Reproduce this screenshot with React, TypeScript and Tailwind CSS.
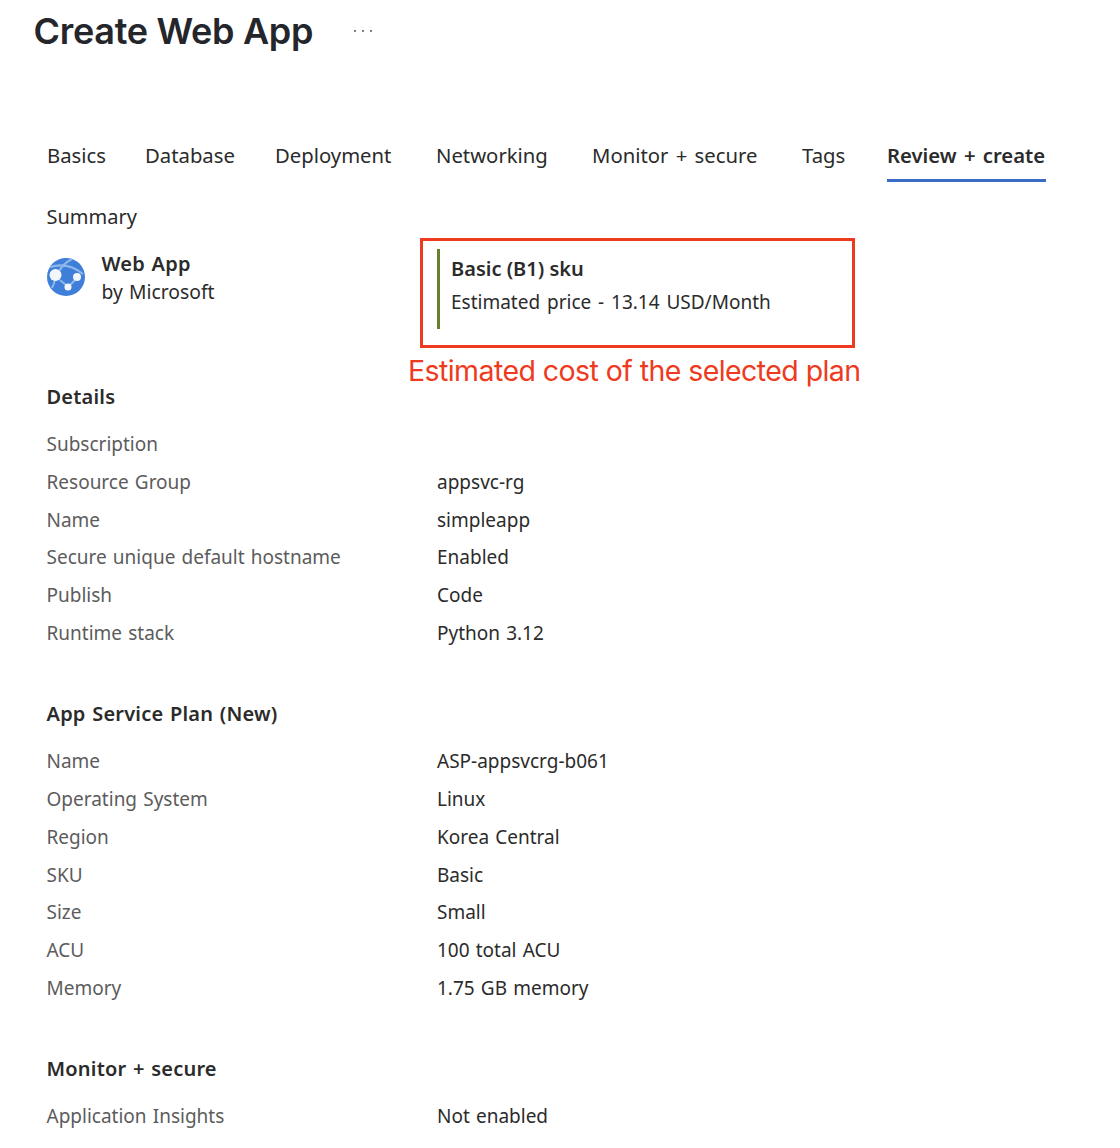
const font = { fontFamily: '"Noto Sans", sans-serif' };

function Row({ label, value }: { label: string; value?: string }) {
  return (
    <div className="flex h-[37.85px] items-center text-[19px] [word-spacing:1.2px]">
      <div className="w-[390.5px] text-[#5c5c5c]">{label}</div>
      <div className="text-[#2b2b2b]">{value}</div>
    </div>
  );
}

function Section({ title, rows, className }: { title: string; rows: [string, string?][]; className: string }) {
  return (
    <section className={className}>
      <h2 className="flex h-[28px] items-center text-[20px] font-semibold tracking-[0.2px] text-[#2b2b2b] [word-spacing:1.2px]">{title}</h2>
      <div className="mt-[14.2px]">
        {rows.map(([l, v], i) => (
          <Row key={i} label={l} value={v} />
        ))}
      </div>
    </section>
  );
}

function WebAppIcon() {
  return (
    <svg width="38" height="38" viewBox="0 0 38 38" className="shrink-0">
      <circle cx="19" cy="19" r="19" fill="#3f7fd9" />
      <path
        d="M3 9c10-3 22-2 33 7M25 1c-6 3-11 8-14 14M13 22l7 6M28 22l-5 5M5 30c2-4 3-7 3-10"
        stroke="#8fb9ea"
        strokeWidth="2"
        fill="none"
      />
      <circle cx="8.5" cy="17" r="6" fill="#f3f6fb" />
      <circle cx="30" cy="19" r="4" fill="#f3f6fb" />
      <circle cx="21" cy="29" r="3.5" fill="#f3f6fb" />
    </svg>
  );
}

export default function App() {
  const tabs = ["Basics", "Database", "Deployment", "Networking", "Monitor + secure", "Tags"];
  return (
    <div className="relative h-[1148px] w-[1120px] overflow-hidden bg-white" style={font}>
      <header className="flex h-[62px] items-center pl-[33.5px]">
        <h1 className="text-[36px] font-semibold tracking-[-0.3px] text-[#24262b]" style={{ fontFamily: "Inter, sans-serif" }}>
          Create Web App
        </h1>
        <span className="ml-[41px] flex gap-[6px]">
          <span className="size-[2px] rounded-full bg-[#555]" />
          <span className="size-[2px] rounded-full bg-[#555]" />
          <span className="size-[2px] rounded-full bg-[#555]" />
        </span>
      </header>

      <nav className="-mt-[1px] pt-[74px] pl-[47px] grid h-[121px] grid-cols-[98px_130px_161px_156px_210px_85px_159px] text-[20.3px] whitespace-nowrap text-[#2b2b2b] [word-spacing:2px]">
        {tabs.map((t) => (
          <span key={t} className="h-[40px] leading-[40px]">{t}</span>
        ))}
        <span className="h-[47px] border-b-[3px] border-[#3b6cc4] font-semibold leading-[40px]">Review + create</span>
      </nav>

      <main className="pl-[46.5px]">
        <div className="mt-[20px] flex h-[30px] items-center text-[20px] text-[#2b2b2b]">Summary</div>
        <div className="mt-[26px] flex h-[38px] items-start gap-[17px]">
          <WebAppIcon />
          <div className="-mt-[8px] text-[20px] leading-[28px] text-[#2b2b2b]">
            <div className="font-semibold tracking-[0.2px] [word-spacing:1.2px]">Web App</div>
            <div className="text-[19.3px] [word-spacing:1.2px]">by Microsoft</div>
          </div>
        </div>

        <Section
          className="mt-[87px]"
          title="Details"
          rows={[
            ["Subscription"],
            ["Resource Group", "appsvc-rg"],
            ["Name", "simpleapp"],
            ["Secure unique default hostname", "Enabled"],
            ["Publish", "Code"],
            ["Runtime stack", "Python 3.12"],
          ]}
        />
        <Section
          className="mt-[48px]"
          title="App Service Plan (New)"
          rows={[
            ["Name", "ASP-appsvcrg-b061"],
            ["Operating System", "Linux"],
            ["Region", "Korea Central"],
            ["SKU", "Basic"],
            ["Size", "Small"],
            ["ACU", "100 total ACU"],
            ["Memory", "1.75 GB memory"],
          ]}
        />
        <Section
          className="mt-[48px]"
          title="Monitor + secure"
          rows={[["Application Insights", "Not enabled"]]}
        />
      </main>

      <div className="absolute left-[420px] top-[238px] h-[110px] w-[435px] border-[3px] border-[#ee3a1e] pl-[14px] pt-[8px]">
        <div className="flex h-[80px] border-l-[3px] border-[#66812b] pl-[11px] text-[#2b2b2b]">
          <div>
            <div className="mt-[1px] flex h-[38px] items-center text-[20px] font-semibold">Basic (B1) sku</div>
            <div className="flex h-[28px] items-center text-[19px] [word-spacing:1.9px]">Estimated price - 13.14 USD/Month</div>
          </div>
        </div>
      </div>
      <div
        className="absolute left-[408px] top-[352px] text-[28.5px] leading-[38px] tracking-[-0.57px] text-[#ee3a1e]"
        style={{ fontFamily: "Inter, sans-serif" }}
      >
        Estimated cost of the selected plan
      </div>
    </div>
  );
}
